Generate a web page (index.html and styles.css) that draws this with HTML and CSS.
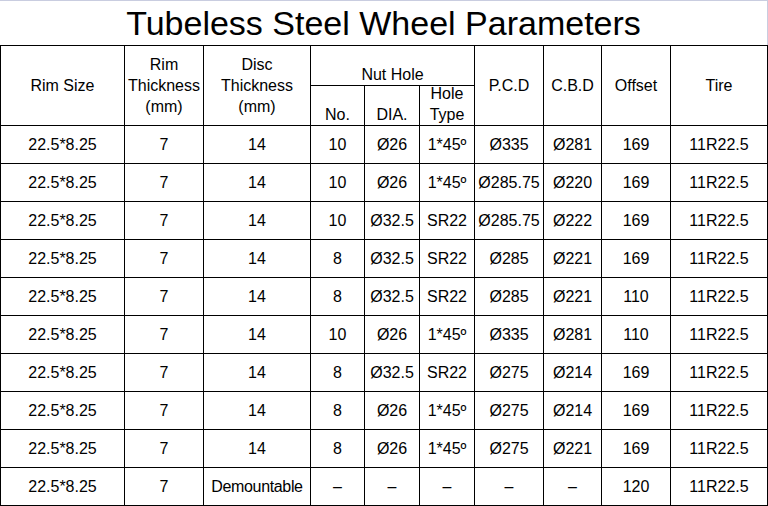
FILE: index.html
```html
<!DOCTYPE html>
<html lang="en">
<head>
<meta charset="utf-8">
<title>Tubeless Steel Wheel Parameters</title>
<link rel="stylesheet" href="styles.css">
</head>
<body>
<div class="sheet">
  <h1 class="title">Tubeless Steel Wheel Parameters</h1>
  <table class="params">
    <colgroup>
      <col class="c-rim"><col class="c-rimt"><col class="c-disc"><col class="c-no"><col class="c-dia"><col class="c-type"><col class="c-pcd"><col class="c-cbd"><col class="c-off"><col class="c-tire">
    </colgroup>
    <thead>
      <tr class="hr1">
        <th rowspan="2">Rim Size</th>
        <th rowspan="2">Rim<br>Thickness<br>(mm)</th>
        <th rowspan="2">Disc<br>Thickness<br>(mm)</th>
        <th colspan="3" class="bottom">Nut Hole</th>
        <th rowspan="2">P.C.D</th>
        <th rowspan="2">C.B.D</th>
        <th rowspan="2">Offset</th>
        <th rowspan="2">Tire</th>
      </tr>
      <tr class="hr2">
        <th class="bottom">No.</th>
        <th class="bottom">DIA.</th>
        <th class="bottom"><div class="stack">Hole<br>Type</div></th>
      </tr>
    </thead>
    <tbody>
      <tr><td>22.5*8.25</td><td>7</td><td>14</td><td>10</td><td>Ø26</td><td>1*45º</td><td>Ø335</td><td>Ø281</td><td>169</td><td>11R22.5</td></tr>
      <tr><td>22.5*8.25</td><td>7</td><td>14</td><td>10</td><td>Ø26</td><td>1*45º</td><td>Ø285.75</td><td>Ø220</td><td>169</td><td>11R22.5</td></tr>
      <tr><td>22.5*8.25</td><td>7</td><td>14</td><td>10</td><td>Ø32.5</td><td>SR22</td><td>Ø285.75</td><td>Ø222</td><td>169</td><td>11R22.5</td></tr>
      <tr><td>22.5*8.25</td><td>7</td><td>14</td><td>8</td><td>Ø32.5</td><td>SR22</td><td>Ø285</td><td>Ø221</td><td>169</td><td>11R22.5</td></tr>
      <tr><td>22.5*8.25</td><td>7</td><td>14</td><td>8</td><td>Ø32.5</td><td>SR22</td><td>Ø285</td><td>Ø221</td><td>110</td><td>11R22.5</td></tr>
      <tr><td>22.5*8.25</td><td>7</td><td>14</td><td>10</td><td>Ø26</td><td>1*45º</td><td>Ø335</td><td>Ø281</td><td>110</td><td>11R22.5</td></tr>
      <tr><td>22.5*8.25</td><td>7</td><td>14</td><td>8</td><td>Ø32.5</td><td>SR22</td><td>Ø275</td><td>Ø214</td><td>169</td><td>11R22.5</td></tr>
      <tr><td>22.5*8.25</td><td>7</td><td>14</td><td>8</td><td>Ø26</td><td>1*45º</td><td>Ø275</td><td>Ø214</td><td>169</td><td>11R22.5</td></tr>
      <tr><td>22.5*8.25</td><td>7</td><td>14</td><td>8</td><td>Ø26</td><td>1*45º</td><td>Ø275</td><td>Ø221</td><td>169</td><td>11R22.5</td></tr>
      <tr><td>22.5*8.25</td><td>7</td><td class="narrow">Demountable</td><td>–</td><td>–</td><td>–</td><td>–</td><td>–</td><td>120</td><td>11R22.5</td></tr>
    </tbody>
  </table>
</div>
</body>
</html>
```
FILE: styles.css
```css
html, body {
  margin: 0;
  padding: 0;
  background: #ffffff;
}
body {
  width: 768px;
  height: 506px;
  overflow: hidden;
  font-family: "Liberation Sans", Arial, sans-serif;
  color: #000000;
}
.sheet {
  width: 767px;
  border-top: 1px solid #c9cde0;
  border-right: 1px solid #c9cde0;
}
.title {
  margin: 0;
  height: 44px;
  line-height: 44px;
  font-size: 34px;
  font-weight: normal;
  text-align: center;
}
.params {
  width: 767px;
  table-layout: fixed;
  border-collapse: collapse;
  font-size: 16px;
}
.c-rim { width: 124px; }
.c-rimt { width: 79px; }
.c-disc { width: 107px; }
.c-no { width: 54px; }
.c-dia { width: 55px; }
.c-type { width: 55px; }
.c-pcd { width: 69px; }
.c-cbd { width: 58px; }
.c-off { width: 69px; }
.c-tire { width: 97px; }
.params th,
.params td {
  border: 1px solid #000000;
  padding: 0;
  text-align: center;
  vertical-align: middle;
  font-weight: normal;
  white-space: nowrap;
}
.params th {
  line-height: 21px;
}
.params th.bottom {
  vertical-align: bottom;
}
.hr1 { height: 40px; }
.hr2 { height: 40px; }
.params tbody tr { height: 38px; }
.params td {
  line-height: 18px;
  padding-top: 1px;
}
.stack {
  margin-top: -4px;
}
.narrow {
  letter-spacing: -0.35px;
}
```
